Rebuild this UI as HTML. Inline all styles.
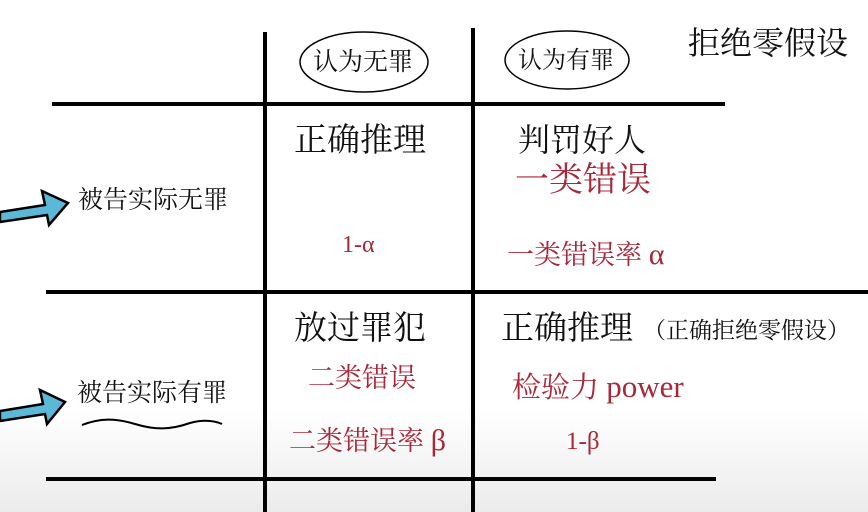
<!DOCTYPE html>
<html><head><meta charset="utf-8"><style>
html,body{margin:0;padding:0}
body{width:868px;height:512px;position:relative;overflow:hidden;background:linear-gradient(#fff 0,#fff 410px,#ebebeb 512px);font-family:"Liberation Serif","Noto Serif CJK SC",serif}
.t{position:absolute;white-space:nowrap;line-height:1;color:#111}
.r{color:#a8283a}
.l{position:absolute;background:#000}
</style></head><body>
<div class="l" style="left:263px;top:32px;width:4px;height:480px"></div>
<div class="l" style="left:471px;top:28px;width:4px;height:484px"></div>
<div class="l" style="left:52px;top:102px;width:673px;height:4px"></div>
<div class="l" style="left:46px;top:290px;width:822px;height:4px"></div>
<div class="l" style="left:46px;top:477px;width:670px;height:4px"></div>
<svg style="position:absolute;left:0;top:0" width="868" height="512">
<ellipse cx="364" cy="62" rx="64" ry="30" fill="none" stroke="#000" stroke-width="1.5"/>
<ellipse cx="567" cy="60" rx="62" ry="29" fill="none" stroke="#000" stroke-width="1.5"/>
<polygon points="0,212 45,205 42,191 68,203 49,225 47,215 0,222" fill="#5bb8d6" stroke="#000" stroke-width="2.5"/>
<polygon points="0,411 43,404 40,390 65,402 47,424 45,414 0,421" fill="#5bb8d6" stroke="#000" stroke-width="2.5"/>
<path d="M82,425 C100,418 115,418 135,424 C155,430 170,430 190,423 C205,419 215,421 222,424" fill="none" stroke="#000" stroke-width="2"/>
</svg>
<div class="t" style="left:313px;top:50px;font-size:25px">认为无罪</div>
<div class="t" style="left:518px;top:49px;font-size:24px">认为有罪</div>
<div class="t" style="left:688px;top:27px;font-size:32px">拒绝零假设</div>
<div class="t" style="left:78px;top:188px;font-size:25px">被告实际无罪</div>
<div class="t" style="left:77px;top:381px;font-size:25px">被告实际有罪</div>
<div class="t" style="left:294px;top:125px;font-size:33px">正确推理</div>
<div class="t" style="left:518px;top:124px;font-size:32px">判罚好人</div>
<div class="t r" style="left:515px;top:164px;font-size:34px">一类错误</div>
<div class="t r" style="left:342px;top:233px;font-size:24px">1-α</div>
<div class="t r" style="left:507px;top:240px;font-size:27px">一类错误率 <span style="font-size:30px">α</span></div>
<div class="t" style="left:294px;top:313px;font-size:33px">放过罪犯</div>
<div class="t r" style="left:308px;top:365px;font-size:27px">二类错误</div>
<div class="t r" style="left:289px;top:426px;font-size:27px">二类错误率 <span style="font-size:30px">β</span></div>
<div class="t" style="left:501px;top:313px;font-size:33px">正确推理</div>
<div class="t" style="left:643px;top:319px;font-size:23px">（正确拒绝零假设）</div>
<div class="t r" style="left:512px;top:371px;font-size:29px">检验力 <span style="font-size:31px">power</span></div>
<div class="t r" style="left:566px;top:429px;font-size:25px">1-β</div>
</body></html>
